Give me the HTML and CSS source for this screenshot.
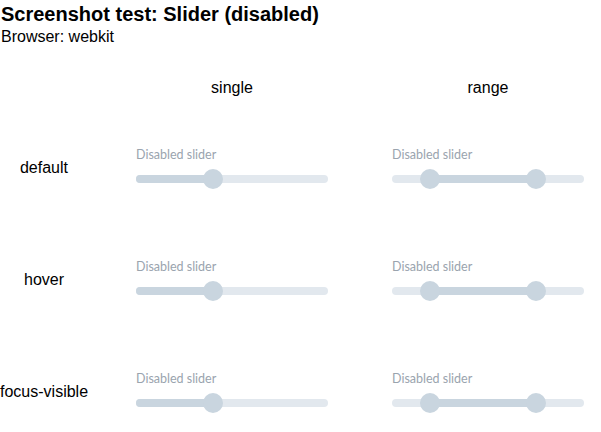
FILE: index.html
```html
<!DOCTYPE html>
<html>
<head>
<meta charset="utf-8">
<link rel="stylesheet" href="styles.css">
</head>
<body>
<header class="page-head">
  <h1 class="title">Screenshot test: Slider (disabled)</h1>
  <p class="subtitle">Browser: webkit</p>
</header>
<div class="matrix">
  <div class="corner"></div>
  <div class="col-head">single</div>
  <div class="col-head">range</div>

  <div class="row-head">default</div>
  <div class="cell">
    <div class="slider">
      <div class="slider-label">Disabled slider</div>
      <div class="slider-control">
        <div class="track"></div>
        <div class="fill" style="left:0%;width:40%"></div>
        <div class="thumb" style="left:40%"></div>
      </div>
    </div>
  </div>
  <div class="cell">
    <div class="slider">
      <div class="slider-label">Disabled slider</div>
      <div class="slider-control">
        <div class="track"></div>
        <div class="fill" style="left:20%;width:55%"></div>
        <div class="thumb" style="left:20%"></div>
        <div class="thumb" style="left:75%"></div>
      </div>
    </div>
  </div>

  <div class="row-head">hover</div>
  <div class="cell">
    <div class="slider">
      <div class="slider-label">Disabled slider</div>
      <div class="slider-control">
        <div class="track"></div>
        <div class="fill" style="left:0%;width:40%"></div>
        <div class="thumb" style="left:40%"></div>
      </div>
    </div>
  </div>
  <div class="cell">
    <div class="slider">
      <div class="slider-label">Disabled slider</div>
      <div class="slider-control">
        <div class="track"></div>
        <div class="fill" style="left:20%;width:55%"></div>
        <div class="thumb" style="left:20%"></div>
        <div class="thumb" style="left:75%"></div>
      </div>
    </div>
  </div>

  <div class="row-head">focus-visible</div>
  <div class="cell">
    <div class="slider">
      <div class="slider-label">Disabled slider</div>
      <div class="slider-control">
        <div class="track"></div>
        <div class="fill" style="left:0%;width:40%"></div>
        <div class="thumb" style="left:40%"></div>
      </div>
    </div>
  </div>
  <div class="cell">
    <div class="slider">
      <div class="slider-label">Disabled slider</div>
      <div class="slider-control">
        <div class="track"></div>
        <div class="fill" style="left:20%;width:55%"></div>
        <div class="thumb" style="left:20%"></div>
        <div class="thumb" style="left:75%"></div>
      </div>
    </div>
  </div>
</div>
</body>
</html>
```
FILE: styles.css
```css
html, body {
  margin: 0;
  padding: 0;
  background: #ffffff;
}
body {
  font-family: "Liberation Sans", Arial, sans-serif;
  color: #000000;
}
.page-head {
  padding: 0 0 0 1px;
}
.title {
  margin: 0;
  font-size: 20px;
  font-weight: bold;
  line-height: 28px;
}
.subtitle {
  margin: 0;
  font-size: 16px;
  line-height: 18px;
}
.matrix {
  display: grid;
  grid-template-columns: 88px 256px 256px;
  grid-template-rows: 64px 112px 112px 112px;
  align-items: center;
  margin-top: 2px;
}
.col-head {
  font-size: 16px;
  padding: 0 16px 0 48px;
  text-align: center;
  align-self: start;
  margin-top: 31px;
}
.row-head {
  font-size: 16px;
  text-align: center;
  white-space: nowrap;
}
.cell {
  padding: 0 16px 0 48px;
}
.slider {
  width: 192px;
  display: flex;
  flex-direction: column;
  gap: 6px;
}
.slider-label {
  font-family: Lato, "Noto Sans", sans-serif;
  font-size: 12.5px;
  line-height: 16px;
  color: #9aa4ae;
}
.slider-control {
  position: relative;
  height: 20px;
}
.track {
  position: absolute;
  left: 0;
  right: 0;
  top: 6px;
  height: 8px;
  border-radius: 4px;
  background: #e2e8ee;
}
.fill {
  position: absolute;
  top: 6px;
  height: 8px;
  border-radius: 4px;
  background: #c9d5df;
}
.thumb {
  position: absolute;
  top: 0;
  width: 20px;
  height: 20px;
  margin-left: -10px;
  border-radius: 50%;
  background: #c9d5df;
}
```
